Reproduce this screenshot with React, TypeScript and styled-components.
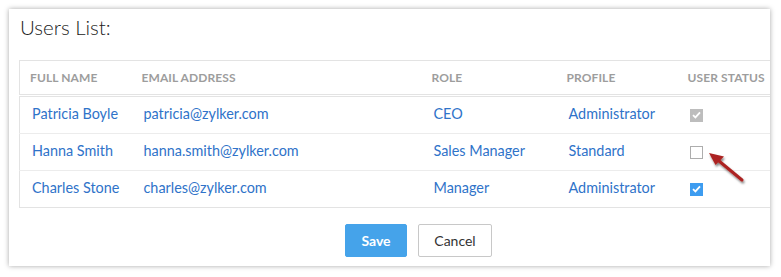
import React from 'react'
import styled, { createGlobalStyle } from 'styled-components'

type User = {
    name: string
    email: string
    role: string
    profile: string
    status: 'locked' | 'off' | 'on'
}

const users: User[] = [
    { name: 'Patricia Boyle', email: 'patricia@zylker.com', role: 'CEO', profile: 'Administrator', status: 'locked' },
    { name: 'Hanna Smith', email: 'hanna.smith@zylker.com', role: 'Sales Manager', profile: 'Standard', status: 'off' },
    { name: 'Charles Stone', email: 'charles@zylker.com', role: 'Manager', profile: 'Administrator', status: 'on' },
]

const columns = [
    { label: 'FULL NAME', width: 112 },
    { label: 'EMAIL ADDRESS', width: 290 },
    { label: 'ROLE', width: 135 },
    { label: 'PROFILE', width: 121 },
    { label: 'USER STATUS', width: 122 },
]

export default function App() {
    return (
        <>
            <GlobalStyle />
            <Card>
                <Title>Users List:</Title>

                <UserTable>
                    <colgroup>
                        {columns.map(c => <col key={c.label} style={{ width: c.width }} />)}
                    </colgroup>
                    <thead>
                        <tr>
                            {columns.map(c => <Th key={c.label}>{c.label}</Th>)}
                        </tr>
                    </thead>
                    <tbody>
                        {users.map(u => (
                            <tr key={u.email}>
                                <Td>{u.name}</Td>
                                <Td>{u.email}</Td>
                                <Td>{u.role}</Td>
                                <Td>{u.profile}</Td>
                                <Td>
                                    <Check state={u.status}>
                                        {u.status !== 'off' && (
                                            <svg width="9" height="8" viewBox="0 0 9 8">
                                                <path d="M1 4.2 L3.4 6.4 L8 1.4" stroke="#fff" strokeWidth="1.8" fill="none" />
                                            </svg>
                                        )}
                                    </Check>
                                </Td>
                            </tr>
                        ))}
                    </tbody>
                </UserTable>

                <Actions>
                    <Button primary>Save</Button>
                    <Button>Cancel</Button>
                </Actions>

                <Arrow width="46" height="38" viewBox="0 0 46 38">
                    <defs>
                        <filter id="sh" x="-30%" y="-30%" width="160%" height="160%">
                            <feDropShadow dx="1" dy="2" stdDeviation="1.3" floodColor="#000" floodOpacity="0.5" />
                        </filter>
                    </defs>
                    <g filter="url(#sh)">
                        <line x1="36" y1="30" x2="13" y2="11" stroke="#ac2320" strokeWidth="3" strokeLinecap="round" />
                        <path d="M3 3 L18 6.5 L9.5 15 Z" fill="#ac2320" />
                    </g>
                </Arrow>
            </Card>
        </>
    )
}

const GlobalStyle = createGlobalStyle`
    body {
        margin: 0;
        padding: 9px 11px 11px 9px;
        background: #fff;
        font-family: Lato, "Open Sans", sans-serif;
    }
`

const Card = styled.div`
    position: relative;
    width: 761px;
    height: 257px;
    box-sizing: border-box;
    background: #fff;
    overflow: hidden;
    padding: 0 0 0 10px;
    box-shadow: 0 0 5px rgba(0, 0, 0, 0.35);
    display: flex;
    flex-direction: column;
`

const Title = styled.div`
    font-size: 20.5px;
    font-weight: 300;
    color: #222;
    padding: 6px 0 0 1px;
    height: 45px;
    box-sizing: border-box;
    margin-bottom: 6px;
`

const UserTable = styled.table`
    border-collapse: collapse;
    table-layout: fixed;
    width: 780px;
    border: 1px solid #e3e3e3;
    flex-shrink: 0;
`

const Th = styled.th`
    height: 33px;
    text-align: left;
    font-size: 12px;
    font-weight: 700;
    color: #9d9d9d;
    padding: 0 0 0 10px;
    white-space: nowrap;
    border-bottom: 3px double #e3e3e3;
    letter-spacing: 0.1px;
`

const Td = styled.td`
    height: 33px;
    padding: 0 0 3px 12px;
    font-size: 14.4px;
    color: #2f73c9;
    border-top: 1px solid #ececec;
    white-space: nowrap;
`

const Check = styled.span<{ state: 'locked' | 'off' | 'on' }>`
    display: inline-flex;
    align-items: center;
    justify-content: center;
    width: 13px;
    height: 13px;
    box-sizing: border-box;
    vertical-align: middle;
    ${props => {
        if (props.state === 'locked')
            return `background: #bdbdbd;`
        if (props.state === 'on')
            return `background: #3d9cf0;`
        return `border: 1px solid #adadad; background: #fff;`
    }}
`

const Actions = styled.div`
    display: flex;
    gap: 11px;
    margin-top: 16px;
    padding-left: 326px;
`

const Button = styled.button<{ primary?: boolean }>`
    height: 33px;
    box-sizing: border-box;
    border-radius: 2px;
    font-family: Lato, "Open Sans", sans-serif;
    font-size: 14px;
    cursor: pointer;
    ${props => {
        if (props.primary)
            return `
                width: 62px;
                background: #45a3ea;
                border: 1px solid #45a3ea;
                color: #fff;
                font-weight: 700;
            `
        return `
            width: 74px;
            background: #fff;
            border: 1px solid #c8c8c8;
            color: #333;
        `
    }}
`

const Arrow = styled.svg`
    position: absolute;
    left: 697px;
    top: 141px;
`
